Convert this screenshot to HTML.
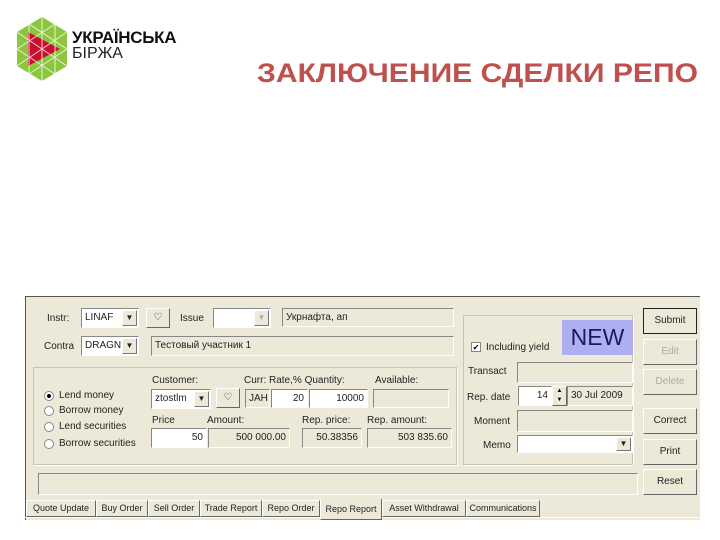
<!DOCTYPE html>
<html><head><meta charset="utf-8"><style>
*{margin:0;padding:0;box-sizing:border-box}
body{width:720px;height:540px;background:#fff;position:relative;overflow:hidden;font-family:"Liberation Sans",sans-serif}
.a{position:absolute}
.win{left:25px;top:296px;width:675px;height:224px;background:#ece9d8;border-left:1px solid #555;border-top:1px solid #555}
.t{position:absolute;font-size:10px;color:#222;white-space:nowrap;font-family:"Liberation Sans","DejaVu Sans",sans-serif}
.f{position:absolute;border:1px solid;border-color:#888 #fff #fff #888;background:#ece9d8;font-size:10px;color:#222;white-space:nowrap;padding:2px 3px;line-height:14px}
.w{background:#fff}
.r{text-align:right}
.dd{position:absolute;top:1px;right:1px;bottom:1px;width:15px;background:#ece9d8;border:1px solid;border-color:#fff #777 #777 #fff;font-size:8px;text-align:center;line-height:14px}
.b{position:absolute;background:#ece9d8;border:1px solid;border-color:#fff #666 #666 #fff;font-size:10px;text-align:center;color:#222}
.g{position:absolute;border:1px solid #c8c4b4;box-shadow:1px 1px 0 #fff}
.tab{position:absolute;top:500px;height:17px;border:1px solid;border-color:#fff #666 #666 #fff;font-size:9px;text-align:center;line-height:15px;color:#222;background:#ece9d8}
.rad{position:absolute;width:10px;height:10px;border-radius:50%;background:#fff;border:1px solid #888}
</style></head><body>
<svg class="a" style="left:14px;top:14px" width="60" height="70" viewBox="0 0 60 70">
<polygon points="28,3 53,18 53,52 28,67 3,52 3,18" fill="#8cc63f"/>
<polygon points="14,18 46,35 14,52" fill="#c8102e"/>
<g stroke="#fff" stroke-width="1" opacity=".8">
<line x1="3" y1="18" x2="53" y2="52"/><line x1="3" y1="52" x2="53" y2="18"/><line x1="28" y1="3" x2="28" y2="67"/>
<line x1="15" y1="10" x2="53" y2="35"/><line x1="3" y1="35" x2="41" y2="60"/><line x1="41" y1="10" x2="3" y2="35"/><line x1="53" y1="35" x2="15" y2="60"/>
<line x1="15" y1="10" x2="15" y2="60"/><line x1="41" y1="10" x2="41" y2="60"/></g>
</svg>
<div class="a" style="left:72px;top:28px;font-size:17px;font-weight:bold;color:#111;letter-spacing:-0.3px">УКРАЇНСЬКА</div>
<div class="a" style="left:72px;top:45px;font-size:16px;color:#222">БІРЖА</div>
<svg class="a" style="left:250px;top:50px" width="460" height="45"><text x="7" y="32" font-family="Liberation Sans" font-weight="bold" font-size="27" fill="#c0504d" textLength="441" lengthAdjust="spacingAndGlyphs">ЗАКЛЮЧЕНИЕ СДЕЛКИ РЕПО</text></svg>

<div class="a win"></div>
<div class="t" style="left:47px;top:313px">Instr:</div>
<div class="f w" style="left:81px;top:308px;width:58px;height:20px">LINAF<div class="dd">▼</div></div>
<div class="b" style="left:146px;top:308px;width:24px;height:20px;line-height:18px">♡</div>
<div class="t" style="left:180px;top:313px">Issue</div>
<div class="f w" style="left:213px;top:308px;width:58px;height:20px"><div class="dd" style="color:#aaa">▼</div></div>
<div class="f" style="left:282px;top:308px;width:172px;height:19px">Укрнафта, ап</div>
<div class="t" style="left:44px;top:341px">Contra</div>
<div class="f w" style="left:81px;top:336px;width:58px;height:20px">DRAGN<div class="dd">▼</div></div>
<div class="f" style="left:151px;top:336px;width:303px;height:20px">Тестовый участник 1</div>

<div class="g" style="left:33px;top:367px;width:424px;height:98px"></div>
<div class="rad" style="left:44px;top:391px"><div style="width:4px;height:4px;background:#000;border-radius:50%;margin:2px"></div></div>
<div class="t" style="left:59px;top:390px">Lend money</div>
<div class="rad" style="left:44px;top:406px"></div><div class="t" style="left:59px;top:405px">Borrow money</div>
<div class="rad" style="left:44px;top:422px"></div><div class="t" style="left:59px;top:421px">Lend securities</div>
<div class="rad" style="left:44px;top:439px"></div><div class="t" style="left:59px;top:438px">Borrow securities</div>
<div class="t" style="left:152px;top:375px">Customer:</div>
<div class="t" style="left:244px;top:375px">Curr: Rate,% Quantity:</div>
<div class="t" style="left:375px;top:375px">Available:</div>
<div class="f w" style="left:151px;top:389px;width:60px;height:20px">ztostlm<div class="dd">▼</div></div>
<div class="b" style="left:216px;top:388px;width:24px;height:20px;line-height:18px">♡</div>
<div class="f" style="left:245px;top:389px;width:25px;height:19px">JAH</div>
<div class="f w r" style="left:271px;top:389px;width:37px;height:19px">20</div>
<div class="f w r" style="left:309px;top:389px;width:59px;height:19px">10000</div>
<div class="f" style="left:373px;top:389px;width:76px;height:19px"></div>
<div class="t" style="left:152px;top:415px">Price</div>
<div class="t" style="left:207px;top:415px">Amount:</div>
<div class="t" style="left:302px;top:415px">Rep. price:</div>
<div class="t" style="left:367px;top:415px">Rep. amount:</div>
<div class="f w r" style="left:151px;top:428px;width:56px;height:20px">50</div>
<div class="f r" style="left:208px;top:428px;width:82px;height:20px">500 000.00</div>
<div class="f r" style="left:302px;top:428px;width:60px;height:20px">50.38356</div>
<div class="f r" style="left:367px;top:428px;width:85px;height:20px">503 835.60</div>

<div class="g" style="left:463px;top:315px;width:170px;height:150px"></div>
<div class="a" style="left:562px;top:320px;width:71px;height:35px;background:#aeaef2;color:#1a1a5a;font-size:23px;text-align:center;line-height:35px">NEW</div>
<div class="a" style="left:471px;top:342px;width:10px;height:10px;background:#fff;border:1px solid #888;font-size:8px;line-height:9px;text-align:center">✔</div>
<div class="t" style="left:486px;top:342px">Including yield</div>
<div class="t" style="left:468px;top:366px">Transact</div>
<div class="f" style="left:517px;top:362px;width:116px;height:21px"></div>
<div class="t" style="left:467px;top:392px">Rep. date</div>
<div class="f w r" style="left:518px;top:386px;width:34px;height:20px">14</div>
<div class="a" style="left:552px;top:386px;width:15px;height:20px;border:1px solid;border-color:#fff #666 #666 #fff;font-size:6px;text-align:center;line-height:9px">▲<br>▼</div>
<div class="f" style="left:567px;top:386px;width:66px;height:20px">30 Jul 2009</div>
<div class="t" style="left:474px;top:416px">Moment</div>
<div class="f" style="left:517px;top:410px;width:116px;height:22px"></div>
<div class="t" style="left:483px;top:440px">Memo</div>
<div class="f w" style="left:517px;top:435px;width:116px;height:18px"><div class="dd" style="line-height:12px">▼</div></div>

<div class="b" style="left:643px;top:308px;width:54px;height:26px;line-height:24px;border:1px solid #222">Submit</div>
<div class="b" style="left:643px;top:339px;width:54px;height:26px;line-height:24px;color:#aaa">Edit</div>
<div class="b" style="left:643px;top:369px;width:54px;height:26px;line-height:24px;color:#aaa">Delete</div>
<div class="b" style="left:643px;top:408px;width:54px;height:26px;line-height:24px">Correct</div>
<div class="b" style="left:643px;top:439px;width:54px;height:26px;line-height:24px">Print</div>
<div class="b" style="left:643px;top:469px;width:54px;height:26px;line-height:24px">Reset</div>

<div class="f" style="left:38px;top:473px;width:600px;height:22px"></div>
<div class="a" style="left:25px;top:517px;width:675px;height:1px;background:#fff"></div>
<div class="tab" style="left:26px;width:70px">Quote Update</div>
<div class="tab" style="left:96px;width:52px">Buy Order</div>
<div class="tab" style="left:148px;width:52px">Sell Order</div>
<div class="tab" style="left:200px;width:62px">Trade Report</div>
<div class="tab" style="left:262px;width:58px">Repo Order</div>
<div class="tab" style="left:320px;top:499px;width:62px;height:21px;line-height:21px;border-top:none">Repo Report</div>
<div class="tab" style="left:382px;width:84px">Asset Withdrawal</div>
<div class="tab" style="left:466px;width:74px">Communications</div>
</body></html>
